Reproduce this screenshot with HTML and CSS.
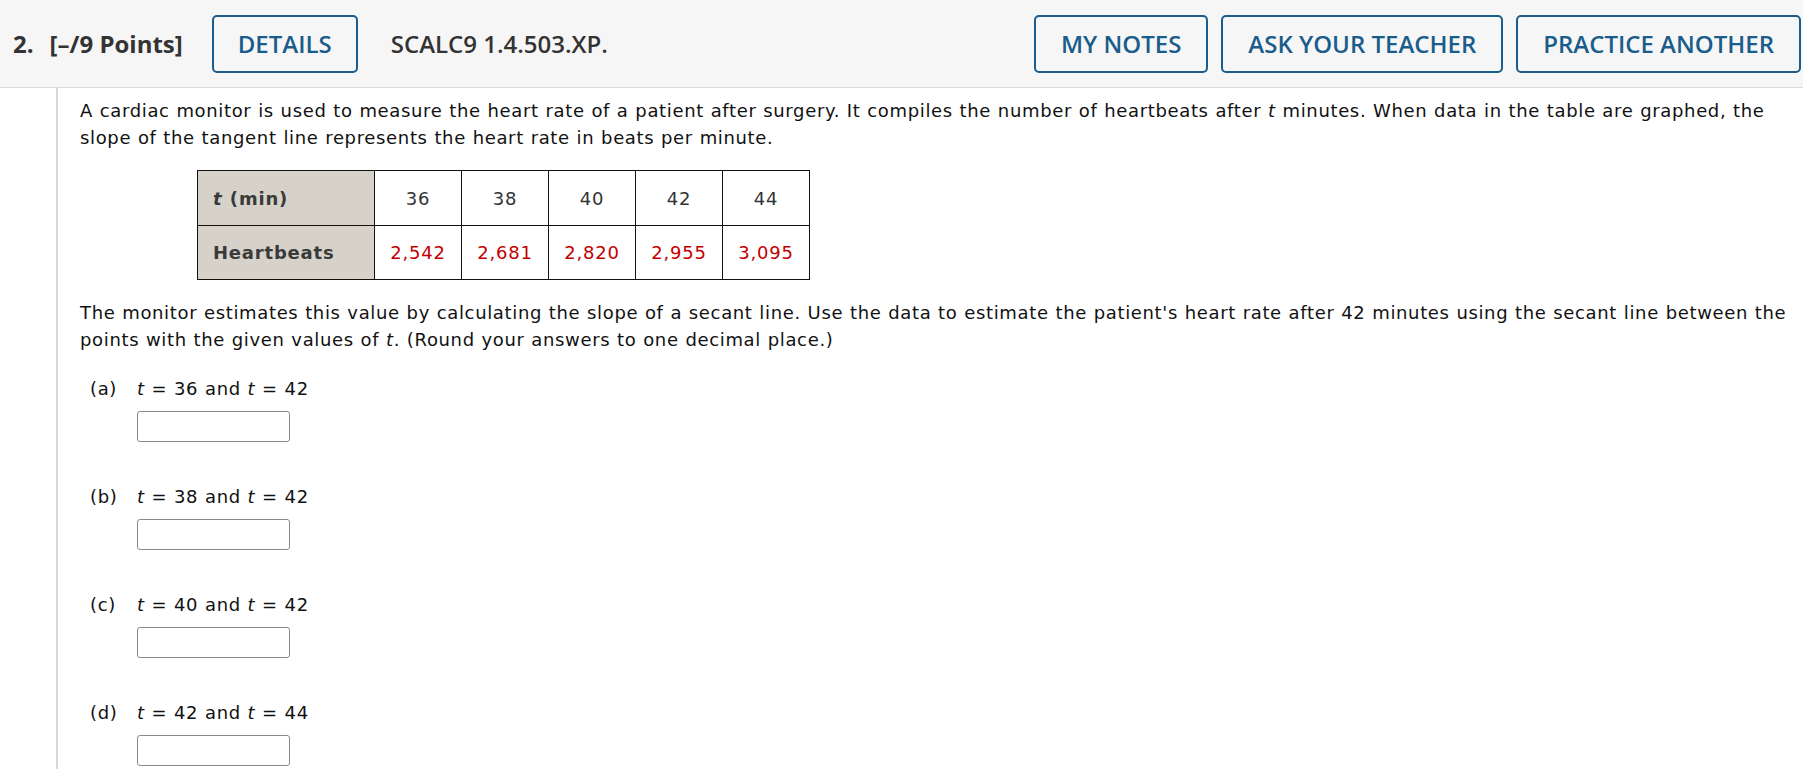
FILE: index.html
```html
<!DOCTYPE html>
<html lang="en">
<head>
<meta charset="utf-8">
<title>SCALC9 1.4.503.XP.</title>
<link rel="stylesheet" href="styles.css">
</head>
<body>
<div class="question">
  <header class="qhead">
    <div class="qhead-left">
      <span class="qnum">2.</span>
      <span class="qpoints">[–/9 Points]</span>
      <button class="btn btn-details">DETAILS</button>
      <span class="qcode">SCALC9 1.4.503.XP.</span>
    </div>
    <div class="qhead-right">
      <button class="btn">MY NOTES</button>
      <button class="btn">ASK YOUR TEACHER</button>
      <button class="btn">PRACTICE ANOTHER</button>
    </div>
  </header>
  <div class="qbody">
    <p class="para">A cardiac monitor is used to measure the heart rate of a patient after surgery. It compiles the number of heartbeats after <i>t</i> minutes. When data in the table are graphed, the slope of the tangent line represents the heart rate in beats per minute.</p>
    <table class="data">
      <colgroup>
        <col class="c-head"><col class="c-val"><col class="c-val"><col class="c-val"><col class="c-val"><col class="c-val">
      </colgroup>
      <tr class="row-t">
        <th><i>t</i> (min)</th>
        <td>36</td><td>38</td><td>40</td><td>42</td><td>44</td>
      </tr>
      <tr class="row-h">
        <th>Heartbeats</th>
        <td class="red">2,542</td><td class="red">2,681</td><td class="red">2,820</td><td class="red">2,955</td><td class="red">3,095</td>
      </tr>
    </table>
    <p class="para para2">The monitor estimates this value by calculating the slope of a secant line. Use the data to estimate the patient's heart rate after 42 minutes using the secant line between the points with the given values of <i>t</i>. (Round your answers to one decimal place.)</p>
    <ol class="parts">
      <li class="part">
        <span class="plabel">(a)</span>
        <div class="pcontent">
          <div class="pline"><i>t</i> = 36 and <i>t</i> = 42</div>
          <input class="answer" type="text">
        </div>
      </li>
      <li class="part">
        <span class="plabel">(b)</span>
        <div class="pcontent">
          <div class="pline"><i>t</i> = 38 and <i>t</i> = 42</div>
          <input class="answer" type="text">
        </div>
      </li>
      <li class="part">
        <span class="plabel">(c)</span>
        <div class="pcontent">
          <div class="pline"><i>t</i> = 40 and <i>t</i> = 42</div>
          <input class="answer" type="text">
        </div>
      </li>
      <li class="part">
        <span class="plabel">(d)</span>
        <div class="pcontent">
          <div class="pline"><i>t</i> = 42 and <i>t</i> = 44</div>
          <input class="answer" type="text">
        </div>
      </li>
    </ol>
  </div>
</div>
</body>
</html>
```

FILE: styles.css
```css
* { box-sizing: border-box; }
html, body { margin: 0; padding: 0; background: #fff; }
body { font-family: "DejaVu Sans", Verdana, sans-serif; color: #111; overflow: hidden; }

.question { width: 1803px; }

.qhead {
  height: 88px;
  background: #f6f6f6;
  border-bottom: 1px solid #dcdcdc;
  display: flex;
  align-items: center;
  justify-content: space-between;
  padding: 0 2px 0 13px;
  font-family: "Open Sans", sans-serif;
  color: #333;
}
.qhead-left { display: flex; align-items: center; }
.qhead-right { display: flex; align-items: center; gap: 13px; }

.qnum { font-weight: 700; font-size: 24px; margin-right: 16px; }
.qpoints { font-weight: 700; font-size: 24px; margin-right: 29px; }
.qcode { font-weight: 600; font-size: 24px; margin-left: 33px; color: #333; }

.btn {
  height: 58px;
  padding: 0 25px;
  border: 2px solid #1a5d8c;
  border-radius: 5px;
  background: transparent;
  color: #1a5d8c;
  font-family: "Open Sans", sans-serif;
  font-weight: 600;
  font-size: 24px;
  line-height: 1;
  cursor: pointer;
}
.btn-details { width: 146px; padding: 0; }

.qbody {
  margin-left: 56px;
  border-left: 2px solid #d9d9d9;
  padding: 9px 3px 40px 22px;
  min-height: 700px;
  font-size: 18px;
  line-height: 27px;
  letter-spacing: 0.65px;
  word-spacing: 0.4px;
}

.para { margin: 0; }
.para2 { margin-top: 19px; }

.data {
  border-collapse: collapse;
  table-layout: fixed;
  width: 612px;
  margin: 19px 0 0 117px;
  color: #333;
  font-size: 18px;
  letter-spacing: 0.8px;
}
.c-head { width: 177px; }
.c-val { width: 87px; }
.data th, .data td { border: 1px solid #111; }
.data th {
  background: #d6d2c9;
  text-align: left;
  padding: 0 0 0 15px;
  font-weight: 700;
  color: #3a3a3a;
}
.data td { text-align: center; padding: 0; }
.row-t { height: 55px; }
.row-h { height: 54px; }
.data td.red { color: #c30000; }

.parts {
  list-style: none;
  margin: 22px 0 0 10px;
  padding: 0;
  display: flex;
  flex-direction: column;
  gap: 41px;
}
.part { display: flex; }
.plabel { width: 47px; flex: none; }
.pcontent { display: flex; flex-direction: column; align-items: flex-start; }
.answer {
  margin-top: 9px;
  width: 153px;
  height: 31px;
  border: 1px solid #8a8a8a;
  border-radius: 3px;
  background: #fff;
  padding: 0;
}
```
